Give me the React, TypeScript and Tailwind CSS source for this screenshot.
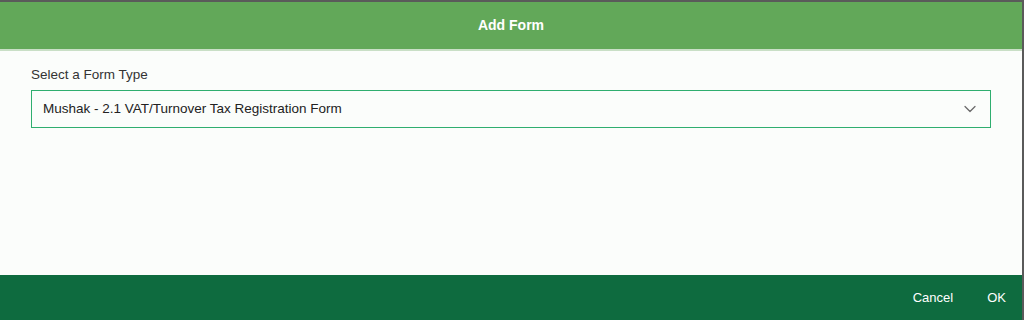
import { ChevronDown } from "lucide-react";

export default function App() {
  return (
    <div className="h-[320px] w-[1024px] flex flex-col border-t-2 border-r-2 border-[#5a5a5a] bg-[#fbfdfb] font-['Liberation_Sans',Arial,sans-serif]">
      <div className="h-[49px] shrink-0 bg-[#62a859] border-b-2 border-[#c9dfc6] flex items-center justify-center">
        <span className="text-white text-[14px] font-bold">Add Form</span>
      </div>
      <div className="flex-1 px-[31px] pt-[14px]">
        <label className="block text-[13.5px] leading-[20px] text-[#333] mb-[5px]">Select a Form Type</label>
        <div className="h-[38px] border border-[#2fae6f] bg-[#fbfdfb] flex items-center justify-between pl-[11px] pr-[10px]">
          <span className="text-[13.5px] text-[#222]">Mushak - 2.1 VAT/Turnover Tax Registration Form</span>
          <ChevronDown className="w-[20px] h-[20px] text-[#6a6a6a]" strokeWidth={1.5} />
        </div>
      </div>
      <div className="h-[45px] shrink-0 bg-[#0e6b3f] flex items-center justify-end pr-[16px] gap-[34px]">
        <button className="text-white text-[13px]">Cancel</button>
        <button className="text-white text-[13px]">OK</button>
      </div>
    </div>
  );
}
